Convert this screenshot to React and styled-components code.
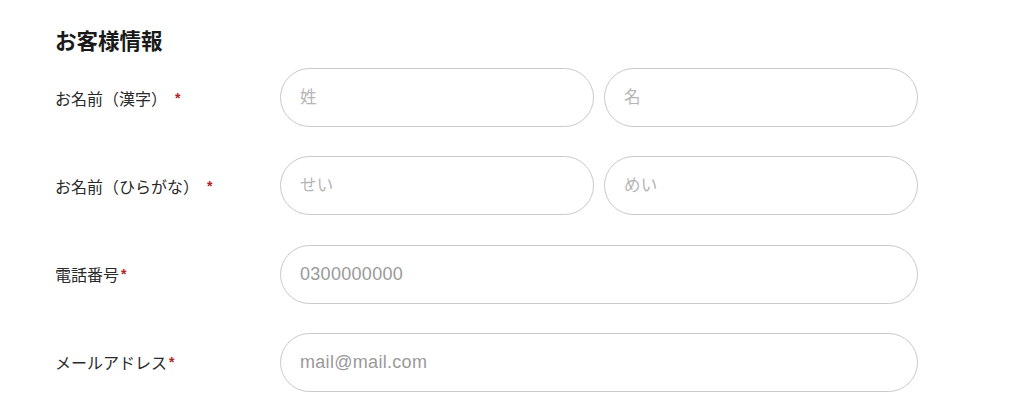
import styled, { createGlobalStyle } from "styled-components";

const GlobalStyle = createGlobalStyle`
  body {
    margin: 0;
    background: #fff;
    font-family: "Liberation Sans", "Noto Sans CJK JP", sans-serif;
    color: #222;
  }
`;

const Section = styled.section`
  padding: 25px 0 0 55px;
  width: 863px;
`;

const Heading = styled.h2`
  margin: 0 0 13px;
  font-family: "Noto Sans CJK JP", sans-serif;
  font-size: 21.5px;
  line-height: 30px;
  font-weight: 700;
  color: #1a1a1a;
`;

const Rows = styled.div`
  display: flex;
  flex-direction: column;
  gap: 29.3px;
`;

const Row = styled.div`
  display: grid;
  grid-template-columns: 225px 1fr;
  align-items: center;
`;

const Label = styled.label`
  font-family: "Noto Sans CJK JP", sans-serif;
  font-size: 16px;
  color: #2a2a2a;
  display: flex;
  align-items: baseline;
`;

const Required = styled.span`
  color: #b0221f;
  font-family: "Liberation Sans", sans-serif;
  font-weight: 700;
  font-size: 14px;
  margin-left: ${(p) => (p.spaced ? "8px" : "2px")};
  position: relative;
  top: -2px;
`;

const Fields = styled.div`
  display: grid;
  grid-template-columns: ${(p) => (p.split ? "1fr 1fr" : "1fr")};
  gap: 10px;
`;

const Input = styled.input`
  box-sizing: border-box;
  width: 100%;
  height: 59px;
  border: 1.5px solid #c9c9c9;
  border-radius: 30px;
  padding: 0 19px;
  font-family: "Liberation Sans", "Noto Sans CJK JP", sans-serif;
  font-size: ${(p) => (p.kana ? "16.5px" : "18px")};
  letter-spacing: 0.3px;
  color: #333;
  background: #fff;
  outline: none;

  &::placeholder {
    color: ${(p) => (p.kana ? "#b5b5b5" : "#9a9a9a")};
  }
`;

const rows = [
  { label: "お名前（漢字）", spaced: true, inputs: ["姓", "名"], kana: true },
  { label: "お名前（ひらがな）", spaced: true, inputs: ["せい", "めい"], kana: true },
  { label: "電話番号", inputs: ["0300000000"] },
  { label: "メールアドレス", inputs: ["mail@mail.com"] },
];

export default function App() {
  return (
    <>
      <GlobalStyle />
      <Section>
        <Heading>お客様情報</Heading>
        <Rows>
          {rows.map((r) => (
            <Row key={r.label}>
              <Label>
                {r.label}
                <Required spaced={r.spaced}>*</Required>
              </Label>
              <Fields split={r.inputs.length > 1}>
                {r.inputs.map((ph) => (
                  <Input key={ph} placeholder={ph} kana={r.kana} />
                ))}
              </Fields>
            </Row>
          ))}
        </Rows>
      </Section>
    </>
  );
}
